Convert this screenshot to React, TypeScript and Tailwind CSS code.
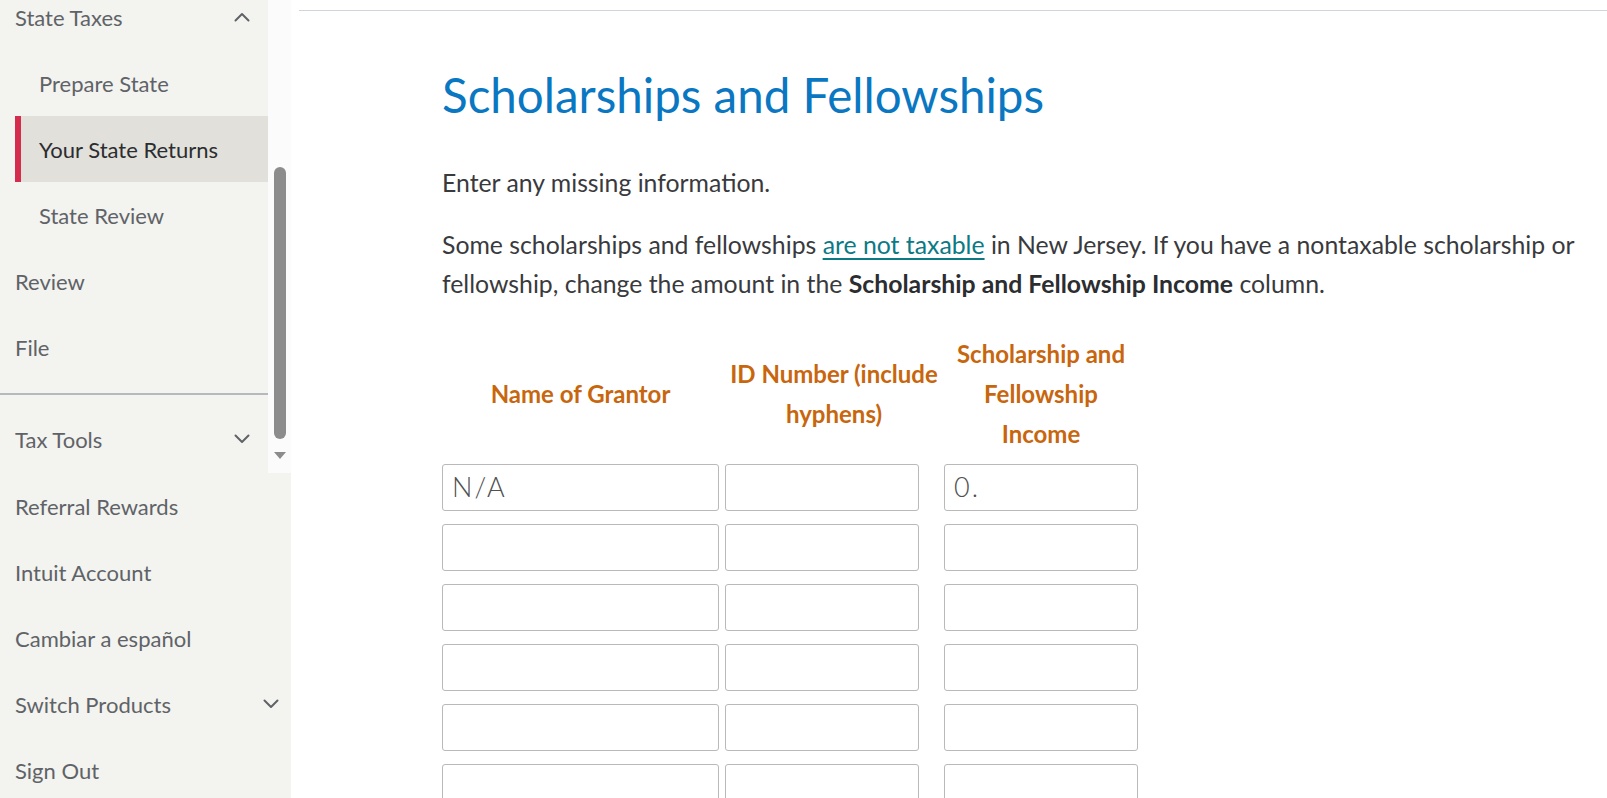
import React from "react";

const Chevron = ({ up = false }: { up?: boolean }) => (
  <svg width="16" height="10" viewBox="0 0 16 10" fill="none" className="shrink-0">
    <polyline
      points={up ? "1.5,8.5 8,2 14.5,8.5" : "1.5,1.5 8,8 14.5,1.5"}
      stroke="#5f6368"
      strokeWidth="2"
      strokeLinecap="round"
      strokeLinejoin="round"
    />
  </svg>
);

const NavItem = ({
  label,
  indent = false,
  active = false,
  chevron,
  chevronClass = "pr-[18px]",
}: {
  label: string;
  indent?: boolean;
  active?: boolean;
  chevron?: "up" | "down";
  chevronClass?: string;
}) => (
  <div
    className={`flex h-[66px] shrink-0 items-center justify-between ${
      active
        ? "ml-[15px] bg-[#e1e0da] border-l-[6px] border-[#d52b4c] pl-[18px]"
        : indent
        ? "pl-[39px]"
        : "pl-[15px]"
    } ${chevron ? chevronClass : ""}`}
  >
    <span className={`text-[22px] ${active ? "text-[#2b2d30]" : "text-[#5f6368]"}`}>{label}</span>
    {chevron && <Chevron up={chevron === "up"} />}
  </div>
);

const Input = ({ w, value }: { w: string; value?: string }) => (
  <div
    className={`${w} h-[47px] shrink-0 rounded-[3px] border border-[#b9b9b9] bg-white flex items-center px-[9px] text-[27px] font-light tracking-[0.08em] text-[#505050]`}
  >
    {value}
  </div>
);

export default function App() {
  const rows = [0, 1, 2, 3, 4, 5];
  return (
    <div
      className="flex h-[798px] w-[1607px] overflow-hidden bg-white"
      style={{ fontFamily: "Lato, 'Noto Sans', Arial, sans-serif" }}
    >
      {/* Sidebar */}
      <aside className="flex w-[291px] shrink-0 flex-col overflow-hidden bg-[#f3f3ef]">
        <div className="flex h-[473px] shrink-0">
          <div className="w-[268px] overflow-hidden">
            <div className="-mt-[16px]">
              <NavItem label="State Taxes" chevron="up" />
              <NavItem label="Prepare State" indent />
              <NavItem label="Your State Returns" active />
              <NavItem label="State Review" indent />
              <NavItem label="Review" />
              <NavItem label="File" />
              <div className="mt-[13px] h-[2px] bg-[#b5b9bd]" />
              <div className="mt-[11px]">
                <NavItem label="Tax Tools" chevron="down" />
              </div>
            </div>
          </div>
          <div className="flex w-[23px] flex-col items-center bg-[#fbfbfb] pt-[167px]">
            <div className="h-[272px] w-[12px] rounded-full bg-[#8c8c8c]" />
            <svg width="14" height="9" viewBox="0 0 14 9" className="mt-[12px]">
              <polygon points="1,1 13,1 7,8" fill="#8c8c8c" />
            </svg>
          </div>
        </div>
        <NavItem label="Referral Rewards" />
        <NavItem label="Intuit Account" />
        <NavItem label="Cambiar a español" />
        <NavItem label="Switch Products" chevron="down" chevronClass="pr-[12px]" />
        <NavItem label="Sign Out" />
      </aside>

      {/* Main */}
      <main className="min-w-0 flex-1">
        <div className="ml-[8px] h-[11px] border-b border-[#cfd5da]" />
        <div className="pl-[151px] pt-[55px] text-[#393a3d]">
          <h1 className="text-[47.5px] font-normal leading-[57px] text-[#0a77c2]">
            Scholarships and Fellowships
          </h1>
          <p className="mt-[40px] text-[24.8px] leading-[39px]">Enter any missing information.</p>
          <p className="mt-[23px] w-[1160px] text-[24.8px] leading-[39px]">
            Some scholarships and fellowships{" "}
            <span className="text-[#0b7a85] underline underline-offset-[4px]">are not taxable</span> in New
            Jersey. If you have a nontaxable scholarship or fellowship, change the amount in the{" "}
            <span className="font-bold text-[#2b2d30]">Scholarship and Fellowship Income</span> column.
          </p>

          <div className="mt-[30px] flex text-[24px] font-bold leading-[40px] text-[#c8660e]">
            <div className="flex h-[121px] w-[277px] shrink-0 items-center justify-center text-center">
              Name of Grantor
            </div>
            <div className="ml-[6px] flex h-[121px] w-[218px] shrink-0 items-center justify-center text-center">
              ID Number (include hyphens)
            </div>
            <div className="ml-[1px] flex h-[121px] w-[194px] shrink-0 items-center justify-center text-center">
              Scholarship and Fellowship Income
            </div>
          </div>

          <div className="mt-[10px] flex flex-col gap-[13px]">
            {rows.map((r) => (
              <div key={r} className="flex">
                <Input w="w-[277px]" value={r === 0 ? "N/A" : undefined} />
                <div className="ml-[6px]">
                  <Input w="w-[194px]" />
                </div>
                <div className="ml-[25px]">
                  <Input w="w-[194px]" value={r === 0 ? "0." : undefined} />
                </div>
              </div>
            ))}
          </div>
        </div>
      </main>
    </div>
  );
}
